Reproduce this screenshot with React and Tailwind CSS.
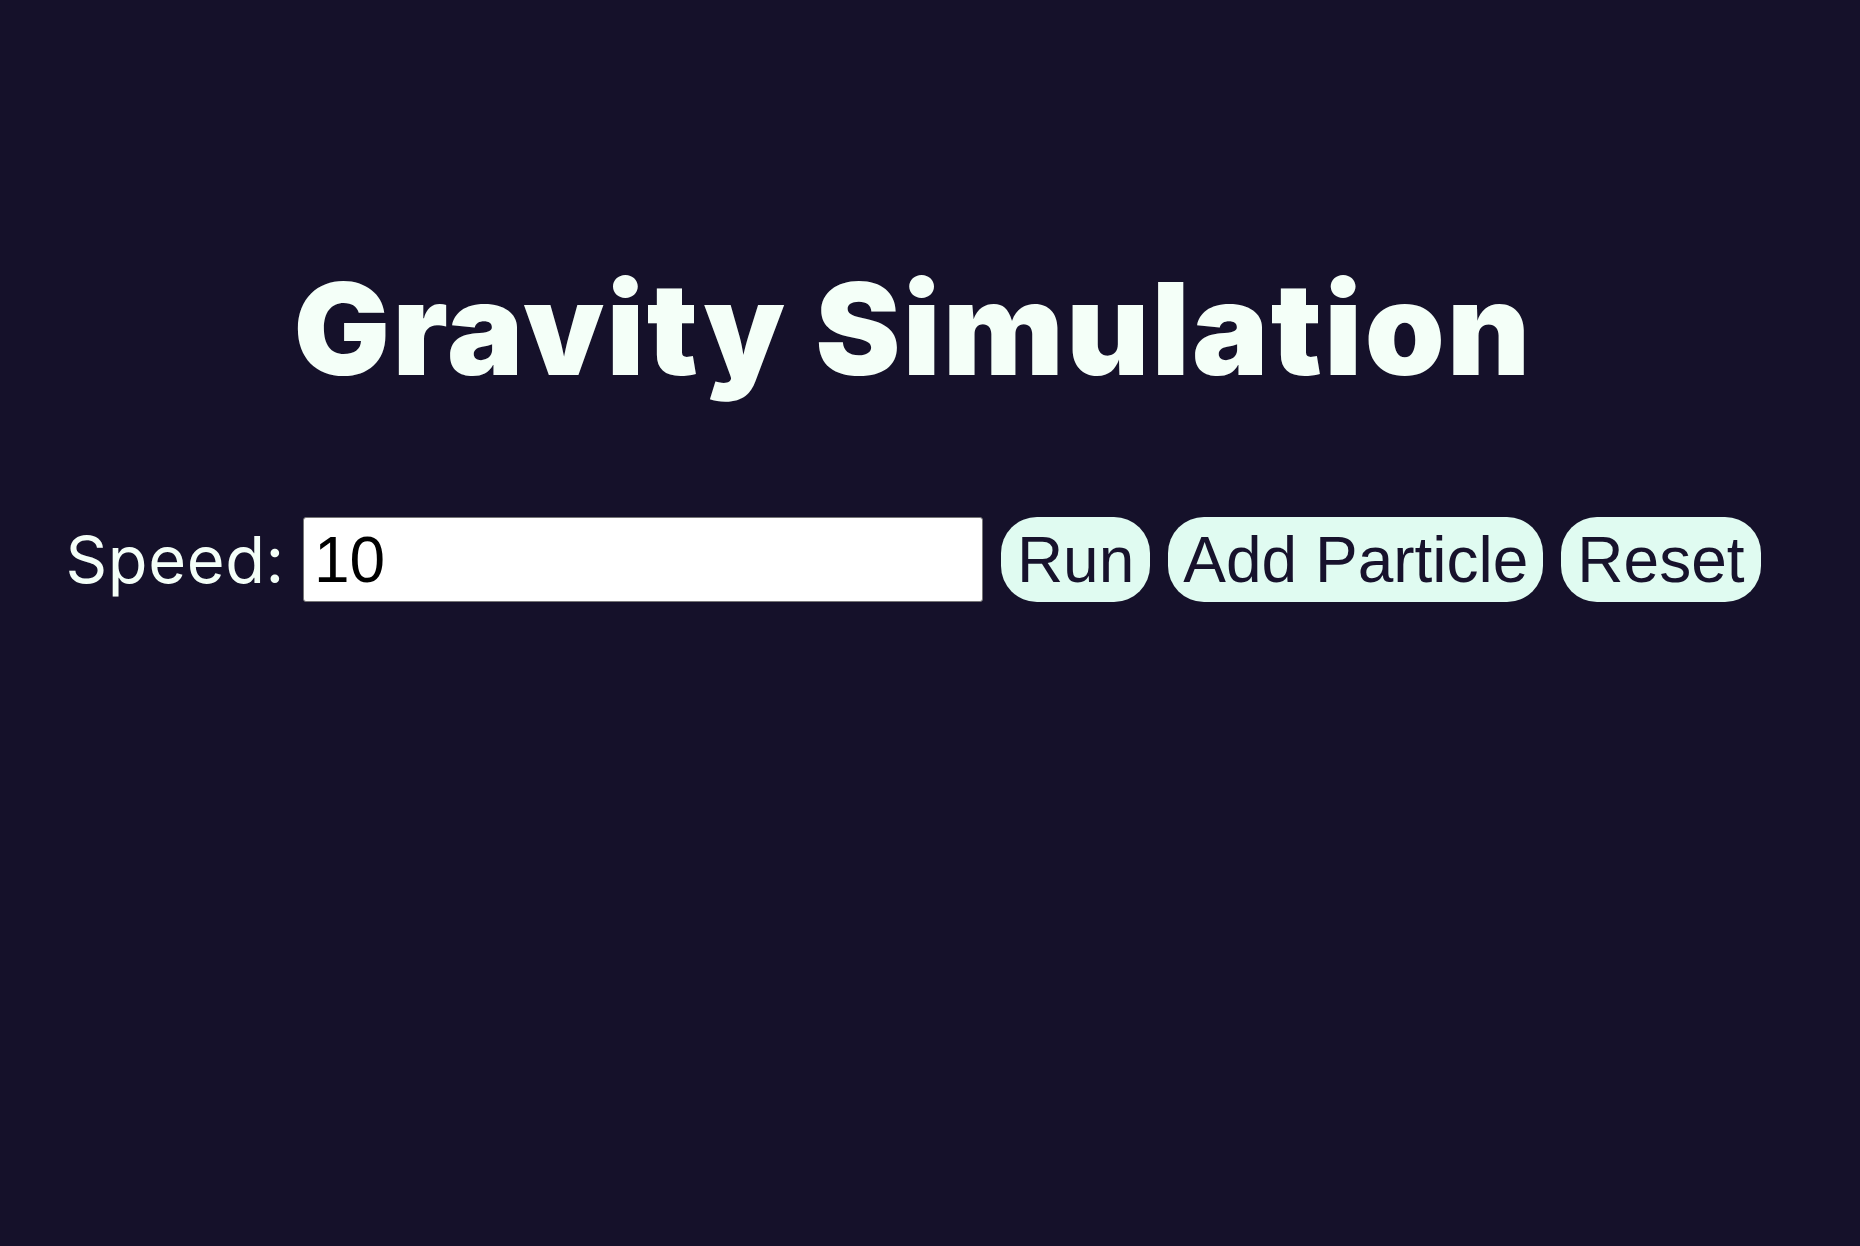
import React, { useState } from "react";

const App = () => {
  const [speed, setSpeed] = useState("10");

  return (
    <div className="min-h-screen bg-[#15112a] pr-[34px] flex flex-col items-center font-['Liberation_Sans',Arial,sans-serif]">
      {/* Title */}
      <h1 className="mt-[265px] text-[128px] leading-none font-black tracking-[2.4px] text-[#f4fff8] font-['Inter',sans-serif]">
        Gravity Simulation
      </h1>

      {/* Controls */}
      <div className="mt-[124px] flex items-center gap-[18px] text-[64px] leading-none">
        <label htmlFor="speed" className="text-[#f4fff8] font-['Inter',sans-serif] text-[65px] tracking-[0.6px]">
          Speed:
        </label>
        <input
          id="speed"
          type="text"
          value={speed}
          onChange={(e) => setSpeed(e.target.value)}
          className="w-[680px] h-[85px] pl-[10px] pr-[4px] bg-white text-black border border-[#767676] rounded-[3px] outline-none"
        />
        <button className="h-[85px] px-4 rounded-[36px] bg-[#e0fbf1] text-[#17122c]">
          Run
        </button>
        <button className="h-[85px] px-[15px] rounded-[36px] bg-[#e0fbf1] text-[#17122c]">
          Add Particle
        </button>
        <button className="h-[85px] px-4 rounded-[36px] bg-[#e0fbf1] text-[#17122c]">
          Reset
        </button>
      </div>
    </div>
  );
};

export default App;
